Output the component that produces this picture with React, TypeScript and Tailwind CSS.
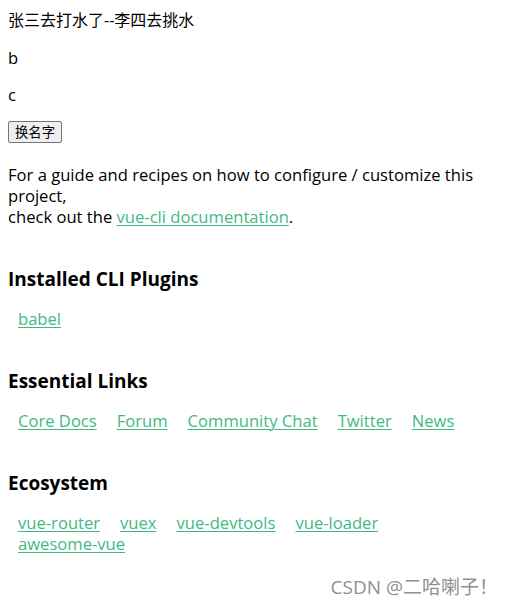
import React, { useState } from 'react';

const essentialLinks = ['Core Docs', 'Forum', 'Community Chat', 'Twitter', 'News'];
const ecosystemLinks = ['vue-router', 'vuex', 'vue-devtools', 'vue-loader'];

const font = { fontFamily: '"Open Sans", "Noto Sans CJK SC", sans-serif' };

function LinkList({ items, extra }: { items: string[]; extra?: string }) {
  return (
    <ul className="mt-4 p-0 list-none">
      {items.map((item) => (
        <li key={item} className="inline-block mx-[10px]">
          <a href="#" className="text-[#42b983] underline underline-offset-[2px] decoration-1">
            {item}
          </a>
        </li>
      ))}
      {extra && (
        <>
          <br />
          <li className="inline-block mx-[10px]">
            <a href="#" className="text-[#42b983] underline underline-offset-[2px] decoration-1">
              {extra}
            </a>
          </li>
        </>
      )}
    </ul>
  );
}

export default function App() {
  const [name, setName] = useState('张三去打水了--李四去挑水');

  return (
    <div
      className="relative h-[606px] w-[511px] overflow-hidden bg-white px-2 pt-[10px] text-[16.6px] leading-[21px] text-black"
      style={font}
    >
      <p className="text-[16px]">{name}</p>
      <p className="mt-4">b</p>
      <p className="mt-4">c</p>
      <button
        className="mt-4 block h-[22px] rounded-[2px] border border-[#767676] bg-[#efefef] px-[6px] text-[13.33px] leading-[18px] text-black"
        onClick={() => setName(name)}
      >
        换名字
      </button>

      <p className="mt-[21px]">
        For a guide and recipes on how to configure / customize this
        <br />
        project,
        <br />
        check out the{' '}
        <a href="#" className="text-[#42b983] underline underline-offset-[2px] decoration-1">
          vue-cli documentation
        </a>
        .
      </p>

      <h3 className="mt-[40px] text-[19px] font-bold leading-[25px]">Installed CLI Plugins</h3>
      <LinkList items={['babel']} />

      <h3 className="mt-10 text-[19px] font-bold leading-[25px]">Essential Links</h3>
      <LinkList items={essentialLinks} />

      <h3 className="mt-10 text-[19px] font-bold leading-[25px]">Ecosystem</h3>
      <LinkList items={ecosystemLinks} extra="awesome-vue" />

      <div className="absolute right-[13px] top-[575px] text-[19px] leading-[24px] text-[#8f8f8f] [text-shadow:0_0_2px_#fff]">
        CSDN @二哈喇子！
      </div>
    </div>
  );
}
